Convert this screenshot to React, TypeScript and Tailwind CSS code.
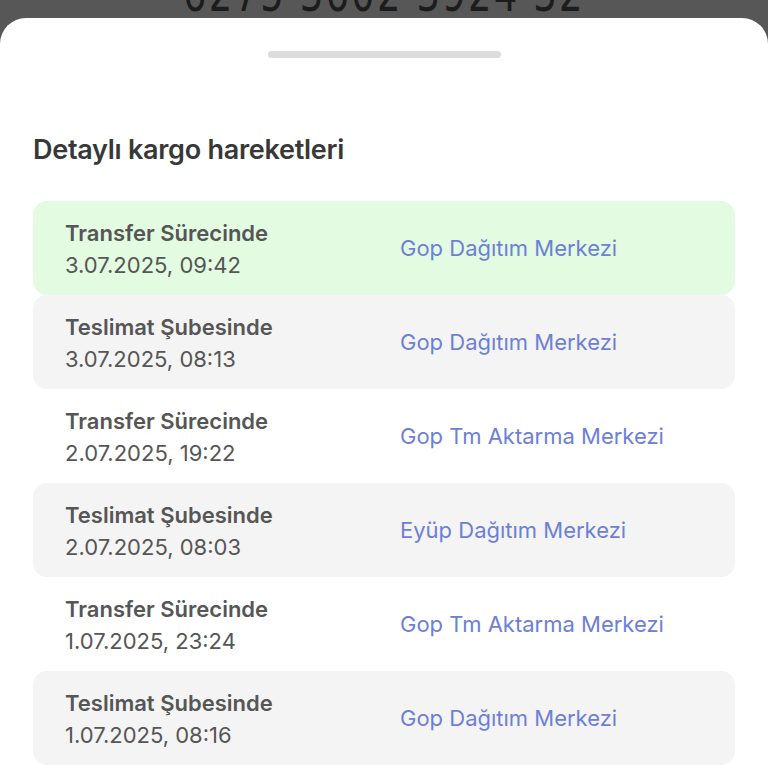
import React from "react";

type Move = { status: string; date: string; place: string };

const moves: Move[] = [
  { status: "Transfer Sürecinde", date: "3.07.2025, 09:42", place: "Gop Dağıtım Merkezi" },
  { status: "Teslimat Şubesinde", date: "3.07.2025, 08:13", place: "Gop Dağıtım Merkezi" },
  { status: "Transfer Sürecinde", date: "2.07.2025, 19:22", place: "Gop Tm Aktarma Merkezi" },
  { status: "Teslimat Şubesinde", date: "2.07.2025, 08:03", place: "Eyüp Dağıtım Merkezi" },
  { status: "Transfer Sürecinde", date: "1.07.2025, 23:24", place: "Gop Tm Aktarma Merkezi" },
  { status: "Teslimat Şubesinde", date: "1.07.2025, 08:16", place: "Gop Dağıtım Merkezi" },
];

export default function App() {
  return (
    <div
      className="h-[768px] w-[768px] overflow-hidden bg-[#575757]"
      style={{ fontFamily: "Inter, 'Noto Sans', sans-serif" }}
    >
      <div className="relative h-[18px] overflow-hidden">
        <div
          className="absolute left-0 right-0 bottom-[-1px] flex justify-center text-[52px] leading-none text-[#1c1c1c]"
          style={{ fontFamily: "'DejaVu Sans', sans-serif" }}
        >
          <span className="inline-block scale-x-[0.71] whitespace-nowrap tracking-[0.06em]">6275 3602 3924 32</span>
        </div>
      </div>

      <div className="h-[750px] rounded-t-[26px] bg-white px-[33px] pt-[33px]">
        <div className="mx-auto h-[7px] w-[233px] rounded-full bg-[#dcdcdc]" />

        <h1 className="mt-[76px] text-[27px] font-semibold leading-[32px] tracking-[-0.01em] text-[#383838]">
          Detaylı kargo hareketleri
        </h1>

        <div className="mt-[35px] flex flex-col">
          {moves.map((m, i) => (
            <div
              key={i}
              className={
                "flex h-[94px] items-center rounded-[14px] pl-[32px] " +
                (i === 0 ? "bg-[#e2fbe1]" : i % 2 === 1 ? "bg-[#f4f4f4]" : "bg-white")
              }
            >
              <div className="w-[335px] pt-[2px] text-[22px] leading-[32px] text-[#565656]">
                <div className="font-semibold">{m.status}</div>
                <div>{m.date}</div>
              </div>
              <div className="text-[22px] text-[#6d80d6]">{m.place}</div>
            </div>
          ))}
        </div>
      </div>
    </div>
  );
}
